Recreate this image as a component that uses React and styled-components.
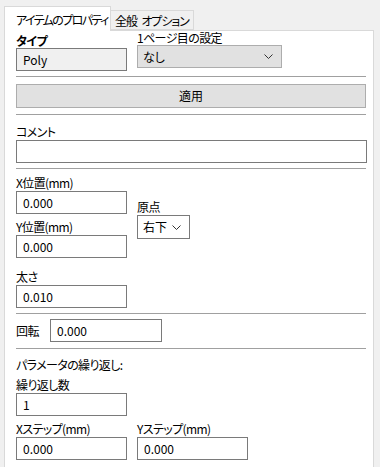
import styled, { createGlobalStyle } from "styled-components"

const GlobalStyle = createGlobalStyle`
  html, body {
    margin: 0;
    padding: 0;
    background: #f0f0f0;
    height: 100%;
    overflow: hidden;
  }
  body {
    font-family: "Noto Sans CJK JP", "Noto Sans", sans-serif;
    font-size: 12px;
    font-feature-settings: "palt";
    color: #000000;
  }
`

const Page = styled.div`
  width: 380px;
  height: 467px;
  padding: 5px 0 0 4px;
  box-sizing: border-box;
  display: flex;
  flex-direction: column;
`

const TabBar = styled.div`
  display: flex;
  align-items: flex-end;
  height: 25px;
  position: relative;
  z-index: 1;
`

const Tab = styled.div`
  box-sizing: border-box;
  height: ${(p) => (p.$active ? "25px" : "20px")};
  width: ${(p) => (p.$active ? "107px" : "auto")};
  padding: ${(p) => (p.$active ? "2px 0 0 11px" : "1px 4px 0 4px")};
  margin-bottom: ${(p) => (p.$active ? "-1px" : "0")};
  background: ${(p) => (p.$active ? "#ffffff" : "#f0f0f0")};
  border: 1px solid #d9d9d9;
  border-bottom: ${(p) => (p.$active ? "none" : "1px solid #d9d9d9")};
  border-left: ${(p) => (p.$active ? "1px solid #d9d9d9" : "none")};
  display: flex;
  align-items: center;
  line-height: 14px;
  letter-spacing: ${(p) => (p.$active ? "-1.6px" : "-1.1px")};
  word-spacing: 3px;
  white-space: pre;
`

const Panel = styled.div`
  box-sizing: border-box;
  width: 370px;
  flex: 1;
  background: #ffffff;
  border: 1px solid #d9d9d9;
  border-bottom: none;
  padding: 0 7px 0 11px;
  display: flex;
  flex-direction: column;
`

const Row = styled.div`
  display: flex;
  align-items: ${(p) => p.$align || "flex-start"};
  gap: ${(p) => p.$gap || "10px"};
  margin-top: ${(p) => p.$mt || "0"};
`

const Column = styled.div`
  display: flex;
  flex-direction: column;
  width: ${(p) => p.$width || "auto"};
  padding-top: ${(p) => p.$top || "0"};
`

const Label = styled.div`
  line-height: ${(p) => p.$lh || "16px"};
  height: ${(p) => p.$lh || "16px"};
  width: ${(p) => p.$width || "auto"};
  margin-top: ${(p) => p.$mt || "0"};
  font-weight: ${(p) => (p.$bold ? 700 : 400)};
  letter-spacing: -0.6px;
  white-space: nowrap;
`

const Field = styled.div`
  box-sizing: border-box;
  width: ${(p) => p.$width || "111px"};
  height: 23px;
  margin-top: ${(p) => p.$mt || "0"};
  border: 1px solid #7a7a7a;
  background: ${(p) => (p.$readonly ? "#f0f0f0" : "#ffffff")};
  padding: 0 6px;
  display: flex;
  align-items: center;
  line-height: 14px;
`

const Select = styled.div`
  box-sizing: border-box;
  width: ${(p) => p.$width};
  height: ${(p) => p.$height || "23px"};
  border: 1px solid ${(p) => (p.$flat ? "#7a7a7a" : "#adadad")};
  background: ${(p) => (p.$flat ? "#ffffff" : "#e1e1e1")};
  padding: 0 8px 0 5px;
  display: flex;
  align-items: center;
  justify-content: space-between;
  line-height: 14px;
`

const Separator = styled.div`
  height: 1px;
  background: #a0a0a0;
  width: 350px;
  margin-top: ${(p) => p.$mt};
`

const Button = styled.div`
  box-sizing: border-box;
  width: 350px;
  height: 24px;
  margin-top: ${(p) => p.$mt};
  border: 1px solid #adadad;
  background: #e1e1e1;
  display: flex;
  align-items: center;
  justify-content: center;
  line-height: 14px;
`

const Chevron = () => (
  <svg width="9" height="5" viewBox="0 0 9 5">
    <path d="M0.5 0.5 L4.5 4.5 L8.5 0.5" fill="none" stroke="#333" strokeWidth="1" />
  </svg>
)

export default function App() {
  return (
    <>
      <GlobalStyle />
      <Page>
        <TabBar>
          <Tab $active>アイテムのプロパティ</Tab>
          <Tab>全般 オプション</Tab>
        </TabBar>
        <Panel>
          <Row $gap="10px">
            <Column $width="111px" $top="2px">
              <Label $lh="15px" $bold>タイプ</Label>
              <Field $readonly>Poly</Field>
            </Column>
            <Column>
              <Label $lh="14px">1ページ目の設定</Label>
              <Select $width="145px">
                なし
                <Chevron />
              </Select>
            </Column>
          </Row>
          <Separator $mt="5px" />
          <Button $mt="7px">適用</Button>
          <Separator $mt="6px" />

          <Label $mt="9px">コメント</Label>
          <Field $width="351px" />
          <Separator $mt="5px" />

          <Row $gap="10px">
            <Column $width="111px">
              <Label $mt="6px">X位置(mm)</Label>
              <Field>0.000</Field>
              <Label $mt="5px">Y位置(mm)</Label>
              <Field>0.000</Field>
            </Column>
            <Column $top="29px">
              <Label $lh="17px">原点</Label>
              <Select $width="53px" $height="24px" $flat>
                右下
                <Chevron />
              </Select>
            </Column>
          </Row>
          <Label $mt="11px">太さ</Label>
          <Field>0.010</Field>
          <Separator $mt="5px" />

          <Row $align="center" $gap="0" $mt="5px">
            <Label $lh="23px" $width="34px">回転</Label>
            <Field $width="112px">0.000</Field>
          </Row>
          <Separator $mt="6px" />

          <Label $mt="8px">パラメータの繰り返し:</Label>
          <Label $mt="4px">繰り返し数</Label>
          <Field>1</Field>
          <Row $gap="10px">
            <Column $width="111px">
              <Label $mt="5px">Xステップ(mm)</Label>
              <Field>0.000</Field>
            </Column>
            <Column $width="111px">
              <Label $mt="5px">Yステップ(mm)</Label>
              <Field>0.000</Field>
            </Column>
          </Row>
        </Panel>
      </Page>
    </>
  )
}
